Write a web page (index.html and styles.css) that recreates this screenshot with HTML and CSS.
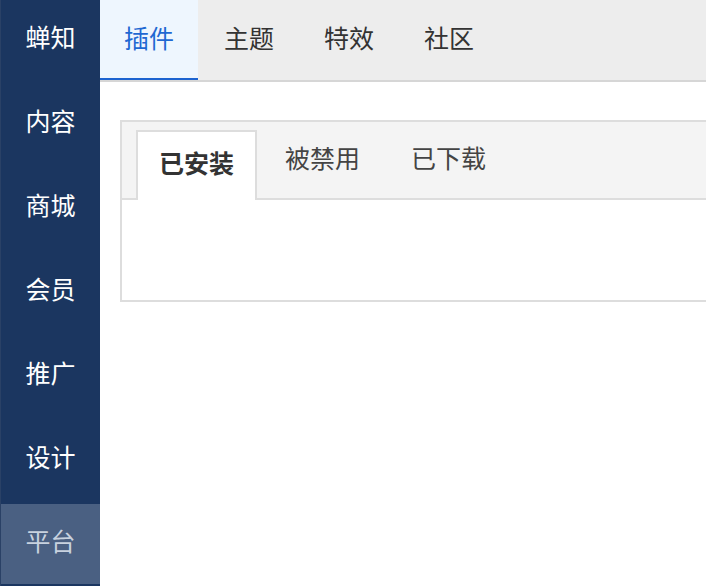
FILE: index.html
```html
<!DOCTYPE html>
<html lang="zh-CN">
<head>
    <meta charset="UTF-8">
    <meta name="viewport" content="width=device-width, initial-scale=1.0">
    <title>蝉知 - 插件</title>
    <link rel="stylesheet" href="styles.css">
</head>
<body>
    <div class="layout">
        <nav class="sidebar">
            <a class="side-item" href="#">蝉知</a>
            <a class="side-item" href="#">内容</a>
            <a class="side-item" href="#">商城</a>
            <a class="side-item" href="#">会员</a>
            <a class="side-item" href="#">推广</a>
            <a class="side-item" href="#">设计</a>
            <a class="side-item active" href="#">平台</a>
        </nav>

        <div class="main">
            <div class="topbar">
                <a class="top-tab active" href="#">插件</a>
                <a class="top-tab" href="#">主题</a>
                <a class="top-tab" href="#">特效</a>
                <a class="top-tab" href="#">社区</a>
            </div>

            <div class="content">
                <div class="panel">
                    <div class="panel-tabs">
                        <a class="panel-tab active" href="#">已安装</a>
                        <a class="panel-tab" href="#">被禁用</a>
                        <a class="panel-tab" href="#">已下载</a>
                    </div>
                    <div class="panel-body"></div>
                </div>
            </div>
        </div>
    </div>
</body>
</html>
```

FILE: styles.css
```css
html, body {
    height: 100%;
}

body {
    margin: 0;
    font-family: "Liberation Sans", "Noto Sans CJK SC", sans-serif;
    color: #333;
    background: #fff;
    overflow: hidden;
}

a {
    text-decoration: none;
    color: inherit;
}

.layout {
    display: flex;
    height: 100%;
}

/* left navigation */
.sidebar {
    width: 99px;
    flex-shrink: 0;
    display: flex;
    flex-direction: column;
    gap: 4px;
    background: #1b3660;
    border-left: 1px solid #2a4166;
}

.side-item {
    height: 80px;
    display: flex;
    align-items: center;
    justify-content: center;
    font-size: 25px;
    color: #fff;
    padding-bottom: 8px;
    box-sizing: border-box;
}

.side-item.active {
    background: #4a6082;
    color: #c8d2df;
}

/* main area */
.main {
    flex: 1;
    min-width: 0;
    display: flex;
    flex-direction: column;
    overflow: hidden;
}

.topbar {
    height: 80px;
    display: flex;
    background: #ededed;
    border-bottom: 2px solid #d6d6d6;
}

.top-tab {
    width: 98px;
    margin-right: 2px;
    display: flex;
    align-items: center;
    justify-content: center;
    font-size: 25px;
    color: #333;
    border-bottom: 2px solid transparent;
    padding-bottom: 5px;
    box-sizing: border-box;
}

.top-tab.active {
    background: #eef6fe;
    color: #1f68d2;
    border-bottom-color: #1c63d0;
}

.content {
    padding: 38px 0 0 20px;
    overflow: hidden;
}

.panel {
    width: 800px;
    border: 2px solid #dddddd;
    border-right: none;
}

.panel-tabs {
    display: flex;
    gap: 5px;
    padding: 8px 0 0 14px;
    background: #f4f4f4;
    border-bottom: 2px solid #dddddd;
    height: 68px;
}

.panel-tab {
    display: flex;
    align-items: center;
    padding: 0 21px 18px;
    font-size: 25px;
    color: #444;
    border: 2px solid transparent;
    border-bottom: none;
    margin-bottom: -2px;
}

.panel-tab.active {
    padding-bottom: 9px;
    background: #fff;
    border-color: #dddddd;
    font-weight: bold;
    color: #333;
}

.panel-body {
    height: 100px;
}
```
